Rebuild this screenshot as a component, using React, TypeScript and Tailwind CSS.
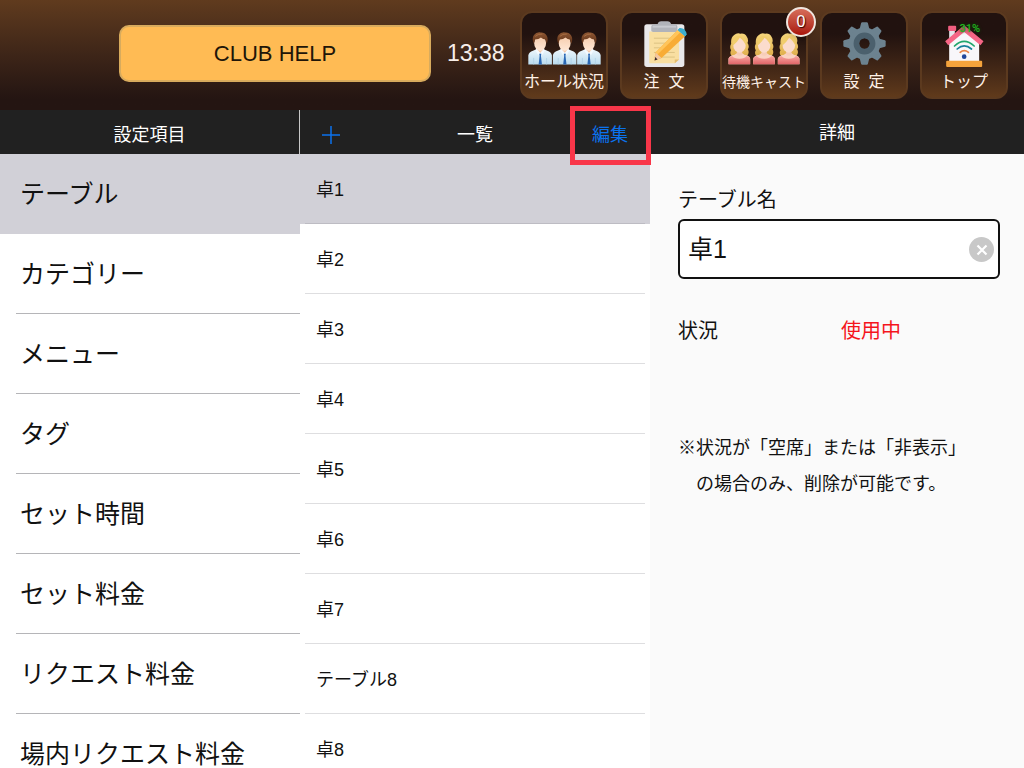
import type { ReactNode } from "react";

const settingItems = [
  "テーブル",
  "カテゴリー",
  "メニュー",
  "タグ",
  "セット時間",
  "セット料金",
  "リクエスト料金",
  "場内リクエスト料金",
];

const tables = ["卓1", "卓2", "卓3", "卓4", "卓5", "卓6", "卓7", "テーブル8", "卓8"];

function StaffFigure({ x }: { x: number }) {
  return (
    <g transform={`translate(${x} 0)`}>
      <path d="M1 98V70Q3 59 15 56L27 51H45L58 56Q70 59 72 70V98Z" fill="url(#shirt)" />
      <path d="M17 78V98M56 78V98" stroke="#a9cde4" strokeWidth="2" />
      <path d="M28 47H45V55L37 64L28 55Z" fill="#f4c9a9" />
      <path d="M26 50L37 63L31 69L22 55ZM47 50L37 63L43 69L51 55Z" fill="#f4faff" />
      <path d="M34 65H40L39 71L42 98H32L35 71Z" fill="#2a67b4" />
      <ellipse cx="36.5" cy="33" rx="18" ry="23" fill="url(#face)" />
      <path
        d="M17 35Q11 17 18 9Q25 -1 38 1Q50 0 56 10Q62 19 57 35Q54 30 53 22Q45 22 39 16Q33 22 21 22Q20 29 17 35Z"
        fill="url(#brownHair)"
      />
      <path d="M22 13Q30 5 43 6" stroke="#a56c42" strokeWidth="3" fill="none" />
    </g>
  );
}

function StaffIcon() {
  return (
    <svg viewBox="0 0 220 99" className="mb-[3px] h-[33px] w-[73px]" aria-hidden="true">
      <defs>
        <linearGradient id="shirt" x1="0" y1="0" x2="0" y2="1">
          <stop offset="0" stopColor="#eef7fc" />
          <stop offset="1" stopColor="#b9dbef" />
        </linearGradient>
        <linearGradient id="face" x1="0" y1="0" x2="0" y2="1">
          <stop offset="0" stopColor="#f5cbab" />
          <stop offset="1" stopColor="#ffe8d6" />
        </linearGradient>
        <linearGradient id="brownHair" x1="0" y1="0" x2="0" y2="1">
          <stop offset="0" stopColor="#8f5833" />
          <stop offset="1" stopColor="#5f3219" />
        </linearGradient>
      </defs>
      <StaffFigure x={0} />
      <StaffFigure x={74} />
      <StaffFigure x={147} />
    </svg>
  );
}

function CastFigure({ x }: { x: number }) {
  return (
    <g transform={`translate(${x} 0)`}>
      <path
        d="M12 70Q3 62 9 52Q3 42 9 32Q7 14 18 6Q26 -2 37 2Q50 0 56 11Q62 20 58 30Q65 40 59 49Q65 61 56 70Z"
        fill="url(#blonde)"
      />
      <path d="M1 94V78Q4 67 18 66L27 60H41L50 66Q64 67 66 78V94Z" fill="#fbd3c3" />
      <path d="M1 94V76Q4 70 12 69Q18 77 34 77Q50 77 55 69Q64 70 66 76V94Z" fill="url(#dress)" />
      <path d="M26 50H42V65Q34 71 26 65Z" fill="#f7cdb9" />
      <ellipse cx="34" cy="35" rx="19" ry="24" fill="#fbdccd" />
      <path d="M14 38Q12 16 26 10Q42 5 52 23Q55 31 54 39Q47 22 35 14Q29 25 14 38Z" fill="#f1cd6c" />
    </g>
  );
}

function CastIcon() {
  return (
    <svg viewBox="0 0 218 96" className="mb-[3px] h-8 w-[73px]" aria-hidden="true">
      <defs>
        <linearGradient id="blonde" x1="0" y1="0" x2="0" y2="1">
          <stop offset="0" stopColor="#f6d67c" />
          <stop offset="1" stopColor="#dfae4c" />
        </linearGradient>
        <linearGradient id="dress" x1="0" y1="0" x2="0" y2="1">
          <stop offset="0" stopColor="#f8a5a0" />
          <stop offset="1" stopColor="#df6467" />
        </linearGradient>
      </defs>
      <CastFigure x={0} />
      <CastFigure x={74} />
      <CastFigure x={148} />
    </svg>
  );
}

function OrderIcon() {
  return (
    <svg viewBox="392 62 134 142" className="h-[47px] w-[45px]" aria-hidden="true">
      <rect x="398" y="72" width="121" height="129" rx="8" fill="#e9e8ea" />
      <path d="M413 94H503V178L490 190H413Z" fill="#f9dfa1" />
      <path d="M503 178L490 190V178Z" fill="#e5bd6e" />
      <path d="M427 114H481M427 129H475M427 143H468M427 157H490M427 171H490" stroke="#dcc383" strokeWidth="3" />
      <path d="M419 91V80Q419 72 429 72H438Q440 63 449 63H468Q477 63 479 72H489Q498 72 498 80V91Q498 95 492 95H425Q419 95 419 91Z" fill="#b1b3ba" />
      <path d="M423 76H494V82H423Z" fill="#c8cad0" />
      <path d="M499 89L521 108L450 174L429 181L432 157Z" fill="#f8ac35" />
      <path d="M499 89L507 96L437 164L432 157Z" fill="#ffc55b" />
      <path d="M432 157L450 174L429 181Z" fill="#f2c6a1" />
      <path d="M431 171L438 178L429 181Z" fill="#37282b" />
      <path d="M499 89L505 83L526 102L521 108Z" fill="#49bcd9" />
      <path d="M505 83Q513 82 519 88T526 102L521 108L499 89Z" fill="#3caecd" />
    </svg>
  );
}

function GearIcon() {
  const teeth = [0, 45, 90, 135, 180, 225, 270, 315];
  return (
    <svg viewBox="-64 -64 128 128" className="mb-[3px] size-[43px]" aria-hidden="true">
      {teeth.map((angle) => (
        <path key={angle} d="M-15 -42L-10 -61Q-9 -63 -7 -63H7Q9 -63 10 -61L15 -42Z" fill="#6c828f" transform={`rotate(${angle})`} />
      ))}
      <circle r="32" fill="none" stroke="#6c828f" strokeWidth="31" />
      <circle r="24" fill="none" stroke="#4b606d" strokeWidth="17" />
    </svg>
  );
}

function HouseIcon() {
  return (
    <svg viewBox="390 74 122 132" className="h-11 w-[41px]" aria-hidden="true">
      <path d="M405 94H422V133H405Z" fill="#e7e5eb" />
      <rect x="402" y="79" width="24" height="16" rx="3" fill="#f25f80" />
      <path d="M405 131L450 91L495 131V188H405Z" fill="#f8f7fa" />
      <path d="M393 126L450 78L508 126L499 138L450 98L402 138Z" fill="#f66686" />
      <rect x="396" y="184" width="108" height="19" rx="3" fill="#f5a33b" />
      <g fill="none" strokeWidth="5" strokeLinecap="round">
        <path d="M421 140Q450 112 480 140" stroke="#20a66c" />
        <path d="M429 149Q450 130 472 149" stroke="#167f9a" />
        <path d="M438 159Q450 149 463 159" stroke="#e98245" />
      </g>
      <circle cx="450" cy="172" r="7" fill="#21479b" />
    </svg>
  );
}

function NavTile({ icon, children, small = false }: { icon: ReactNode; children: ReactNode; small?: boolean }) {
  return (
    <button
      type="button"
      className="relative flex size-[88px] shrink-0 flex-col items-center justify-end rounded-xl border-2 border-[#5c3a1f] bg-linear-to-b from-[#21120f] from-25% to-[#603a1b] pb-[3px] text-[#fff1e7]"
    >
      <span className="flex h-12 items-end justify-center">{icon}</span>
      <span className={small ? "mt-[2px] text-[14px] leading-6 whitespace-pre" : "mt-[2px] text-[16px] leading-6 whitespace-pre"}>{children}</span>
    </button>
  );
}

export default function App() {
  return (
    <div className="flex h-screen min-w-[1000px] flex-col overflow-hidden bg-[#fafafa] font-['Liberation_Sans','Noto_Sans_CJK_JP',sans-serif] text-[#111]">
      <header className="flex h-[110px] shrink-0 items-start justify-end bg-linear-to-b from-[#603b1e] to-[#241512] to-90% pt-[11px] pr-4">
        <button
          type="button"
          className="mt-[14px] h-[57px] w-[312px] rounded-[10px] border-2 border-[#d8ab5d] bg-[#ffbb54] text-[22px] text-[#211508]"
        >
          CLUB HELP
        </button>
        <time className="mt-[26px] ml-4 w-[73px] text-[23px] leading-8 text-[#f8eee8]">13:38</time>
        <nav className="flex gap-3">
          <NavTile icon={<StaffIcon />}>ホール状況</NavTile>
          <NavTile icon={<OrderIcon />}>{"注  文"}</NavTile>
          <div className="relative">
            <NavTile icon={<CastIcon />} small>
              待機キャスト
            </NavTile>
            <span className="absolute -top-1 -right-2 flex size-[30px] items-center justify-center rounded-full border-2 border-[#efe5df] bg-linear-to-b from-[#d66c59] to-[#a91009] text-[16px] text-white shadow-md text-shadow-[1px_1px_1px_#300]">
              0
            </span>
          </div>
          <NavTile icon={<GearIcon />}>{"設  定"}</NavTile>
          <div className="relative">
            <NavTile icon={<HouseIcon />}>トップ</NavTile>
            <span className="absolute top-3 right-7 font-[Roboto,sans-serif] text-[11px] leading-3 font-medium text-[#22b11f] text-shadow-[0_0_3px_#064d08]">
              31%
            </span>
          </div>
        </nav>
      </header>

      <main className="grid min-h-0 flex-1 grid-cols-[300fr_350fr_374fr]">
        <section className="flex min-h-0 flex-col overflow-hidden bg-white">
          <h2 className="flex h-11 shrink-0 items-center justify-center border-r border-[#c8c8c8] bg-[#212121] pt-1.5 text-[18px] text-white">
            設定項目
          </h2>
          <ul>
            {settingItems.map((item, index) => (
              <li key={item} className={index === 0 ? "bg-[#d1d0d7]" : "bg-white pl-4"}>
                <button
                  type="button"
                  className={
                    index === 0
                      ? "flex h-20 w-full items-center pt-0.5 pl-5 text-[25px]"
                      : "flex h-20 w-full items-center border-b border-[#b5b5b8] pt-0.5 pl-1 text-[25px]"
                  }
                >
                  {item}
                </button>
              </li>
            ))}
          </ul>
        </section>

        <section className="flex min-h-0 flex-col bg-white">
          <div className="grid h-11 shrink-0 grid-cols-[80px_1fr_80px] items-center bg-[#212121] pt-1.5 text-[18px]">
            <button type="button" aria-label="追加" className="flex h-full items-center pl-[22px] text-[#0b72ed]">
              <svg viewBox="0 0 18 18" className="size-[18px]" aria-hidden="true">
                <path d="M9 0V18M0 9H18" stroke="currentColor" strokeWidth="1.5" />
              </svg>
            </button>
            <h2 className="text-center text-white">一覧</h2>
            <div className="relative flex h-full items-center justify-center">
              <button type="button" className="text-[#0b72ed]">
                編集
              </button>
              <span className="pointer-events-none absolute -top-2.5 -right-px z-10 h-[59px] w-[81px] border-[5px] border-[#f83649]" />
            </div>
          </div>
          <ul className="min-h-0 overflow-hidden">
            {tables.map((table, index) => (
              <li key={table} className={index === 0 ? "bg-[#d1d0d7] px-[5px]" : "bg-white px-[5px]"}>
                <button
                  type="button"
                  className={
                    index === 0
                      ? "flex h-[70px] w-full items-center border-b border-[#bdbcc3] pt-[3px] pl-[11px] text-[18px]"
                      : "flex h-[70px] w-full items-center border-b border-[#dedee0] pt-[3px] pl-[11px] text-[18px]"
                  }
                >
                  {table}
                </button>
              </li>
            ))}
          </ul>
        </section>

        <section className="flex min-h-0 flex-col bg-[#fafafa]">
          <h2 className="flex h-11 shrink-0 items-center justify-center bg-[#212121] pt-0.5 text-[18px] text-white">詳細</h2>
          <div className="flex flex-col pt-[30px] pr-6 pl-7">
            <label htmlFor="table-name" className="text-[20px] leading-8">
              テーブル名
            </label>
            <div className="relative mt-[3px]">
              <input
                id="table-name"
                type="text"
                defaultValue="卓1"
                className="block h-[60px] w-full rounded-md border-2 border-[#111] bg-white pr-11 pb-1 pl-2 text-[25px] outline-none"
              />
              <button
                type="button"
                aria-label="入力を消去"
                className="absolute top-[18px] right-[6px] flex size-[25px] items-center justify-center rounded-full bg-[#c8c8c8]"
              >
                <svg viewBox="0 0 12 12" className="size-3" aria-hidden="true">
                  <path d="M1.5 1.5L10.5 10.5M10.5 1.5L1.5 10.5" stroke="#fff" strokeWidth="2.2" />
                </svg>
              </button>
            </div>
            <dl className="mt-9 grid grid-cols-2 gap-x-1 text-[20px] leading-8">
              <dt>状況</dt>
              <dd className="text-[#f5151d]">使用中</dd>
            </dl>
            <p className="mt-[83px] text-[18px] leading-9">
              ※状況が「空席」または「非表示」
              <br />
              <span className="pl-[18px]">の場合のみ、削除が可能です。</span>
            </p>
          </div>
        </section>
      </main>
    </div>
  );
}
